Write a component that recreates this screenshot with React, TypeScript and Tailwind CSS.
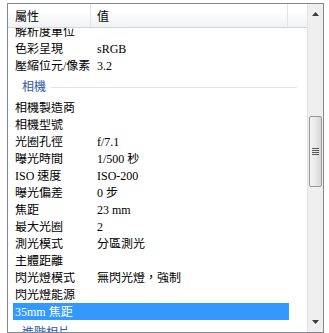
import React from "react";

type Row = { name: string; value?: string; selected?: boolean };

const before: Row[] = [
  { name: "解析度單位" },
  { name: "色彩呈現", value: "sRGB" },
  { name: "壓縮位元/像素", value: "3.2" },
];

const camera: Row[] = [
  { name: "相機製造商" },
  { name: "相機型號" },
  { name: "光圈孔徑", value: "f/7.1" },
  { name: "曝光時間", value: "1/500 秒" },
  { name: "ISO 速度", value: "ISO-200" },
  { name: "曝光偏差", value: "0 步" },
  { name: "焦距", value: "23 mm" },
  { name: "最大光圈", value: "2" },
  { name: "測光模式", value: "分區測光" },
  { name: "主體距離" },
  { name: "閃光燈模式", value: "無閃光燈，強制" },
  { name: "閃光燈能源" },
  { name: "35mm 焦距", selected: true },
];

function ItemRow({ r }: { r: Row }) {
  return (
    <div
      className={
        "ml-[5px] w-[276px] h-[17px] flex items-center whitespace-nowrap " +
        (r.selected ? "bg-[#3399ff] text-white" : "text-black")
      }
    >
      <div className="w-[84px] pl-[2px] shrink-0 overflow-hidden">{r.name}</div>
      <div className="flex-1 overflow-hidden">{r.value ?? ""}</div>
    </div>
  );
}

function Group({ title }: { title: string }) {
  return (
    <div className="h-[25px] flex items-center pl-[14px] pr-[10px]">
      <span className="text-[#2f56b0] pr-[5px] whitespace-nowrap">{title}</span>
      <div className="flex-1 h-px bg-[#dde5ec] mt-[2px]" />
    </div>
  );
}

export default function App() {
  return (
    <div className="w-[329px] h-[333px] bg-white pt-[3px] pl-[7px] font-['Liberation_Serif','Noto_Sans_CJK_TC',serif] text-[12px] leading-none">
      <div className="w-[317px] h-[330px] border border-[#828790] flex bg-white">
        <div className="w-[299px] flex flex-col overflow-hidden">
          <div className="h-[24px] shrink-0 flex border-b border-[#d5d5d5] bg-gradient-to-b from-white from-30% to-[#f1f2f4] text-black font-['Noto_Sans_CJK_TC',sans-serif]">
            <div className="w-[83px] pl-[7px] flex items-center border-r border-[#e2e3ea]">屬性</div>
            <div className="w-[197px] pl-[6px] flex items-center border-r border-[#e2e3ea]">值</div>
            <div className="flex-1" />
          </div>
          <div className="flex-1 overflow-hidden">
            <div className="mt-[-5px]">
              {before.map((r, i) => (
                <ItemRow key={i} r={r} />
              ))}
              <Group title="相機" />
              {camera.map((r, i) => (
                <ItemRow key={i} r={r} />
              ))}
              <Group title="進階相片" />
            </div>
          </div>
        </div>
        <div className="w-[16px] flex flex-col bg-[#efefef] border-l border-[#e4e4e4]">
          <div className="h-[17px] flex items-center justify-center pt-[3px]">
            <svg width="7" height="4" viewBox="0 0 7 4">
              <path d="M3.5 0 L7 4 L0 4 Z" fill="#3c3c3c" />
            </svg>
          </div>
          <div className="h-[95px]" />
          <div className="mx-px h-[71px] rounded-[2px] border border-[#989898] bg-gradient-to-r from-[#f4f4f4] via-[#e9e9e9] to-[#d6d6d6] flex items-center justify-center">
            <div className="flex flex-col gap-px">
              <div className="w-[7px] h-px bg-[#5a5a5a]" />
              <div className="w-[7px] h-px bg-[#5a5a5a]" />
              <div className="w-[7px] h-px bg-[#5a5a5a]" />
              <div className="w-[7px] h-px bg-[#5a5a5a]" />
            </div>
          </div>
          <div className="flex-1" />
          <div className="h-[17px] flex items-center justify-center pb-[3px]">
            <svg width="7" height="4" viewBox="0 0 7 4">
              <path d="M0 0 L7 0 L3.5 4 Z" fill="#3c3c3c" />
            </svg>
          </div>
        </div>
      </div>
    </div>
  );
}
